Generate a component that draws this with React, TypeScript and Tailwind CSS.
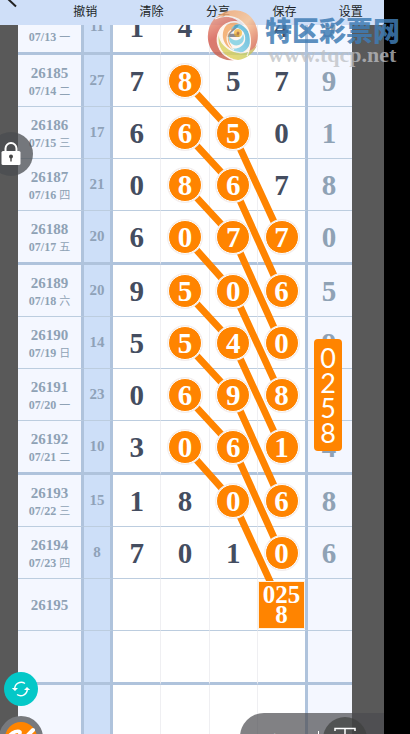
import React from 'react';

type Row = {
  issue?: string;
  date?: string;
  day?: string;
  sum?: string;
  digits?: string[];
  last?: string;
  // columns (0-3) whose digit is circled
  hits?: number[];
  groupEnd?: boolean;
};

const rows: Row[] = [
  { issue: '26184', date: '07/13', day: '一', sum: '11', digits: ['1', '4', '2', '4'], last: '9', groupEnd: true },
  { issue: '26185', date: '07/14', day: '二', sum: '27', digits: ['7', '8', '5', '7'], last: '9', hits: [1] },
  { issue: '26186', date: '07/15', day: '三', sum: '17', digits: ['6', '6', '5', '0'], last: '1', hits: [1, 2] },
  { issue: '26187', date: '07/16', day: '四', sum: '21', digits: ['0', '8', '6', '7'], last: '8', hits: [1, 2] },
  { issue: '26188', date: '07/17', day: '五', sum: '20', digits: ['6', '0', '7', '7'], last: '0', hits: [1, 2, 3], groupEnd: true },
  { issue: '26189', date: '07/18', day: '六', sum: '20', digits: ['9', '5', '0', '6'], last: '5', hits: [1, 2, 3] },
  { issue: '26190', date: '07/19', day: '日', sum: '14', digits: ['5', '5', '4', '0'], last: '9', hits: [1, 2, 3] },
  { issue: '26191', date: '07/20', day: '一', sum: '23', digits: ['0', '6', '9', '8'], hits: [1, 2, 3] },
  { issue: '26192', date: '07/21', day: '二', sum: '10', digits: ['3', '0', '6', '1'], last: '4', hits: [1, 2, 3], groupEnd: true },
  { issue: '26193', date: '07/22', day: '三', sum: '15', digits: ['1', '8', '0', '6'], last: '8', hits: [2, 3] },
  { issue: '26194', date: '07/23', day: '四', sum: '8', digits: ['7', '0', '1', '0'], last: '6', hits: [3] },
  { issue: '26195' },
  { groupEnd: true },
  {},
];

// trend lines in table coordinates, each going down one column per step
const trends = [
  '167,80 215,132 263,236',
  '167,132 215,184 263,290',
  '167,184 215,236 263,342',
  '167,236 215,290 263,394',
  '167,290 215,342 263,446',
  '167,342 215,394 263,500',
  '167,394 215,446 263,552',
  '167,446 215,500 263,604',
];

const menu = ['撤销', '清除', '分享', '保存', '设置'];

function Header() {
  return (
    <header className="flex h-[25px] shrink-0 items-start bg-[#cfdff8] text-[12px] text-[#1c1f26]">
      <button aria-label="返回" className="h-[25px] w-[52px] shrink-0">
        <svg viewBox="0 0 52 25" className="h-full w-full" fill="none" stroke="#222" strokeWidth="2">
          <path d="M16 6.500 L8 -1" />
        </svg>
      </button>
      {menu.map((label) => (
        <button key={label} className="h-[22px] flex-1 leading-[22px]">
          {label}
        </button>
      ))}
    </header>
  );
}

function TrendRow({ row }: { row: Row }) {
  const line = row.groupEnd
    ? 'border-b-[3px] border-b-[#afc3dc]'
    : 'border-b border-b-[#bccddf]';
  const digits = row.digits ?? ['', '', '', ''];

  return (
    <tr className={row.groupEnd ? 'h-[54px]' : 'h-[52px]'}>
      <th scope="row" className={`${line} border-r-[3px] border-r-[#afc3dc] bg-[#f4f7ff] p-0 text-center font-bold text-[#8fa2b5]`}>
        {row.date ? (
          <div className="pt-[3px]">
            <div className="text-[15px] leading-[18px]">{row.issue}</div>
            <div className="text-[12px] leading-[18px]">
              {row.date} <span className="text-[11px] font-normal">{row.day}</span>
            </div>
          </div>
        ) : (
          <div className="text-[15px] leading-[18px]">{row.issue}</div>
        )}
      </th>
      <td className={`${line} border-r-[3px] border-r-[#afc3dc] bg-[#cddff8] p-0 text-center text-[15px] font-bold text-[#8fa2b8]`}>
        {row.sum}
      </td>
      {digits.map((digit, i) => (
        <td
          key={i}
          className={`${line} p-0 text-center text-[29px] leading-[34px] font-bold text-[#444d60] ${
            i === 3 ? 'border-r-[3px] border-r-[#afc3dc]' : 'border-r border-r-[#efeff2]'
          }`}
        >
          {row.issue === '26195' && i === 3 ? (
            <div className="relative z-20 mx-auto flex h-[48px] w-full flex-col justify-center border border-[#fff1e0] bg-[#ff8400] text-[25px] leading-[20px] text-white">
              <span>025</span>
              <span>8</span>
            </div>
          ) : row.hits?.includes(i) ? (
            <span className="relative z-20 mx-auto flex size-[34px] items-center justify-center rounded-full border border-white bg-[#ff8400] text-white ring-1 ring-[#f3eeee]">
              {digit}
            </span>
          ) : (
            digit
          )}
        </td>
      ))}
      <td className={`${line} bg-[#f4f7ff] py-0 pr-[2px] pl-0 text-center text-[29px] leading-[34px] font-bold text-[#8fa2b5]`}>
        {row.last}
      </td>
    </tr>
  );
}

function TrendTable() {
  return (
    <div className="relative -mt-[24px] min-w-0 flex-1">
      <table className="w-full table-fixed border-separate border-spacing-0 bg-white font-['Liberation_Serif','Noto_Sans_CJK_SC',serif]">
        <colgroup>
          <col className="w-[66px]" />
          <col className="w-[29px]" />
          <col />
          <col />
          <col />
          <col className="w-[50px]" />
          <col className="w-[44px]" />
        </colgroup>
        <tbody>
          {rows.map((row, i) => (
            <TrendRow key={i} row={row} />
          ))}
        </tbody>
      </table>
      <svg
        viewBox="0 0 334 734"
        preserveAspectRatio="none"
        className="absolute inset-x-0 top-0 z-10 h-[734px] w-full"
        fill="none"
        stroke="#ff8400"
        strokeWidth="7"
      >
        {trends.map((points) => (
          <polyline key={points} points={points} />
        ))}
      </svg>
    </div>
  );
}

function Watermark() {
  return (
    <div className="pointer-events-none absolute top-[9px] right-[10px] z-30 flex items-start">
      <svg viewBox="0 0 52 52" className="size-[52px] opacity-80">
        <defs>
          <linearGradient id="peach" x1="0" y1="0" x2="1" y2="1">
            <stop offset="0" stopColor="#f3a063" />
            <stop offset="0.5" stopColor="#fbc391" />
            <stop offset="1" stopColor="#c8483c" />
          </linearGradient>
          <linearGradient id="red" x1="0" y1="0" x2="0.4" y2="1">
            <stop offset="0" stopColor="#f0a184" />
            <stop offset="0.5" stopColor="#d4584c" />
            <stop offset="1" stopColor="#c8604a" />
          </linearGradient>
          <linearGradient id="lime" x1="0" y1="1" x2="1" y2="0">
            <stop offset="0" stopColor="#f4cf4e" />
            <stop offset="0.5" stopColor="#c5cf62" />
            <stop offset="1" stopColor="#d56a50" />
          </linearGradient>
          <linearGradient id="sky" x1="0" y1="1" x2="1" y2="0">
            <stop offset="0" stopColor="#8fd6ea" />
            <stop offset="1" stopColor="#3fa9cf" />
          </linearGradient>
        </defs>
        <circle cx="26" cy="26" r="25" fill="#fdeadb" fillOpacity="0.5" />
        {/* outer blades */}
        <path d="M9 9 C20 -2 40 -2 48 14 C54 27 50 41 40 47 C45 36 45 23 37 15 C29 7 18 6 9 9Z" fill="url(#peach)" />
        <path d="M7 10 C-2 21 -1 38 9 46 C14 50 21 52 27 51 C14 47 8 36 11 25 C14 16 23 11 32 13 C25 7 14 6 7 10Z" fill="url(#red)" />
        <path d="M12 25 C9 39 19 50 31 51 C40 50 47 44 50 36 C43 44 34 46 26 42 C18 39 13 32 12 25Z" fill="url(#lime)" />
        {/* inner spiral */}
        <path d="M18 18 C13 27 17 38 27 41 C22 35 20 28 24 22 C27 18 32 16 36 18 C31 12 22 12 18 18Z" fill="#f2a35e" />
        <path d="M36 17 C46 24 46 38 36 43 C31 45 26 43 23 39 C30 41 36 38 38 32 C39 27 37 22 33 20 C30 18 26 19 24 21 C26 15 32 14 36 17Z" fill="url(#sky)" />
        <path d="M22 25 C20 33 26 38 32 36 C37 34 38 29 36 25 C35 30 31 32 27 31 C24 30 22 28 22 25Z" fill="#7accdf" />
        <circle cx="31" cy="24" r="4" fill="#f4b942" />
        <circle cx="31" cy="24" r="1.500" fill="#a7622c" />
        <path
          d="M8 10 C18 5 30 7 37 15 C45 23 45 36 40 47 M27 51 C14 47 8 36 11 25 C14 16 23 11 32 13 M12 25 C13 37 28 48 42 42 M27 41 C19 36 18 26 24 21"
          fill="none"
          stroke="#fff4e8"
          strokeWidth="1.200"
        />
      </svg>
      <div className="mt-[6px] ml-[6px]">
        <div className="text-[27px] leading-[30px] font-black whitespace-nowrap text-[#3f7cb4]/85">特区彩票网</div>
        <div className="ml-[3px] font-['Liberation_Serif',serif] text-[22px] leading-[20px] font-bold text-[#bdbfc3]/75">www.tqcp.net</div>
      </div>
    </div>
  );
}

function FloatingControls() {
  return (
    <>
      <button
        aria-label="锁定"
        className="absolute top-[132px] -left-[11px] z-30 flex size-[44px] items-center justify-center rounded-full bg-[#4a4c50]/75"
      >
        <svg viewBox="0 0 20 26" className="h-[26px] w-[20px]">
          <path d="M4.500 12 V7.500 a5.500 5.500 0 0 1 11 0 V12" fill="none" stroke="#fff" strokeWidth="2" />
          <rect x="0.500" y="10" width="19" height="14" rx="1.500" fill="#fff" />
          <circle cx="10" cy="15.500" r="2" fill="#444" />
          <path d="M9.300 16 h1.400 v4.500 h-1.400z" fill="#444" />
        </svg>
      </button>

      <div className="absolute top-[339px] right-[68px] z-30 flex w-[28px] flex-col items-center rounded-[4px] bg-[#ff8400] py-[6px] font-['Lato',sans-serif] text-[27px] leading-[25px] text-white">
        {['0', '2', '5', '8'].map((n) => (
          <span key={n}>{n}</span>
        ))}
      </div>

      <button
        aria-label="刷新"
        className="absolute top-[672px] left-[4px] z-30 flex size-[34px] items-center justify-center rounded-full bg-[#04c8c8]"
      >
        <svg viewBox="0 0 20 18" className="h-[18px] w-[20px]" fill="none" stroke="#fff" strokeWidth="1.400">
          <path d="M3.800 9.500 A6.500 6.500 0 0 1 14 3.500" />
          <path d="M16.200 8.500 A6.500 6.500 0 0 1 6 14.500" />
          <path d="M0.800 8 H7 L4 11Z M13 10 H19.200 L16 7Z" fill="#fff" stroke="none" />
        </svg>
      </button>

      <button
        aria-label="画笔"
        className="absolute top-[716px] -left-px z-30 size-[44px] rounded-full border-[6px] border-[#77797d] bg-[#ff8400]"
      >
        <svg viewBox="0 0 32 32" className="size-[32px]" fill="none" stroke="#fff" strokeLinecap="round">
          <path d="M4 14 C8 10 13 8 15 10 C16 13 10 16 8 19" strokeWidth="3.500" />
          <path d="M28 8 L16 20" strokeWidth="4" />
        </svg>
      </button>

      <div className="absolute top-[713px] right-[26px] z-30 flex h-[48px] w-[144px] items-start rounded-l-[24px] bg-[#4b4b50]/70 text-white">
        <button className="mt-[16px] ml-[32px] text-[15px] leading-[22px]">设置</button>
        <span className="mt-[18px] ml-[16px] h-[20px] w-px bg-white" />
        <button
          aria-label="下移"
          className="mt-[4px] ml-[4px] flex size-[44px] justify-center rounded-full bg-[#3e403e]/70"
        >
          <svg viewBox="0 0 22 22" className="mt-[10px] size-[22px]" fill="none" stroke="#fff" strokeWidth="1.500">
            <path d="M1 4 V1.500 H21 V4 M11 2 V20" />
          </svg>
        </button>
      </div>
    </>
  );
}

export default function App() {
  return (
    <div className="relative flex h-screen overflow-hidden bg-black font-['Noto_Sans_CJK_SC',sans-serif]">
      <div className="flex min-w-0 flex-1 flex-col">
        <Header />
        <main className="flex min-h-0 flex-1 overflow-hidden bg-[#595959]">
          <div className="w-[18px] shrink-0" />
          <TrendTable />
          <div className="w-[32px] shrink-0" />
        </main>
      </div>
      <div className="w-[26px] shrink-0" />
      <Watermark />
      <FloatingControls />
    </div>
  );
}
